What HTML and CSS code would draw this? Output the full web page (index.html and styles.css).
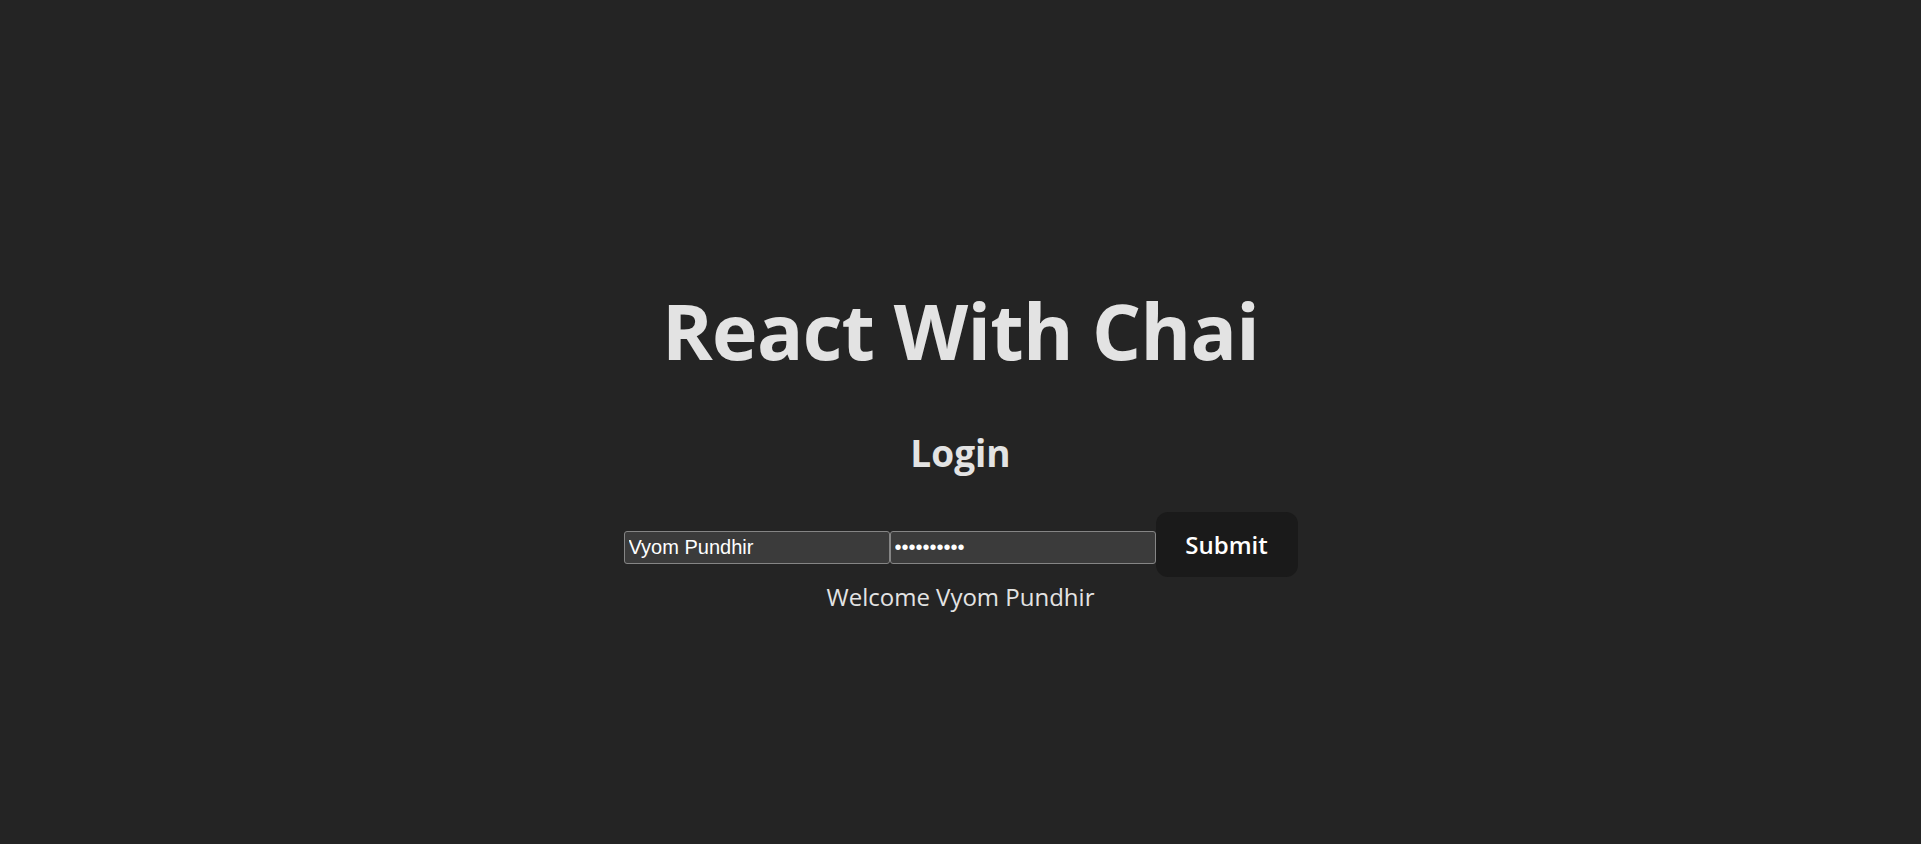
FILE: index.html
```html
<!DOCTYPE html>
<html lang="en">
<head>
<meta charset="UTF-8">
<title>React With Chai</title>
<link rel="stylesheet" href="styles.css">
</head>
<body>
<div class="root">
  <h1 class="title">React With Chai</h1>
  <h2 class="subtitle">Login</h2>
  <div class="form-row">
    <input class="field" type="text" value="Vyom Pundhir" placeholder="username"><input class="field field-pass" type="password" value="0123456789" placeholder="password"><button class="submit" type="button">Submit</button>
  </div>
  <div class="welcome">Welcome Vyom Pundhir</div>
</div>
</body>
</html>
```
FILE: styles.css
```css
html, body {
  margin: 0;
  padding: 0;
}
body {
  background: #242424;
  color: rgba(255, 255, 255, 0.87);
  font-family: "Open Sans", "Noto Sans", sans-serif;
  font-size: 24px;
  min-height: 100vh;
  color-scheme: dark;
}
.root {
  display: flex;
  flex-direction: column;
  align-items: center;
  padding-top: 288px;
  text-align: center;
}
.title {
  margin: 0;
  font-size: 77px;
  line-height: 85px;
  font-weight: 700;
  letter-spacing: -0.7px;
  color: #e3e3e3;
}
.subtitle {
  margin: 53px 0 0;
  font-size: 37px;
  line-height: 54px;
  font-weight: 700;
  color: #e3e3e3;
}
.form-row {
  display: flex;
  align-items: flex-start;
  margin-top: 32px;
  height: 65px;
}
.field {
  box-sizing: border-box;
  width: 266px;
  height: 33px;
  margin-top: 19px;
  padding: 0 4px;
  background: #3b3b3b;
  border: 1px solid #858585;
  border-radius: 3px;
  color: #ffffff;
  font-family: "Liberation Sans", Arial, sans-serif;
  font-size: 20px;
  outline: none;
}
.field-pass {
  width: 266px;
}
.submit {
  box-sizing: border-box;
  width: 142px;
  height: 65px;
  padding: 0;
  background: #1a1a1a;
  border: 1px solid transparent;
  border-radius: 12px;
  color: #ffffff;
  font-family: "Open Sans", "Noto Sans", sans-serif;
  font-size: 24px;
  font-weight: 600;
  cursor: pointer;
}
.welcome {
  margin-top: 2px;
  font-size: 24px;
  line-height: 36px;
  color: #e3e3e3;
}
```
